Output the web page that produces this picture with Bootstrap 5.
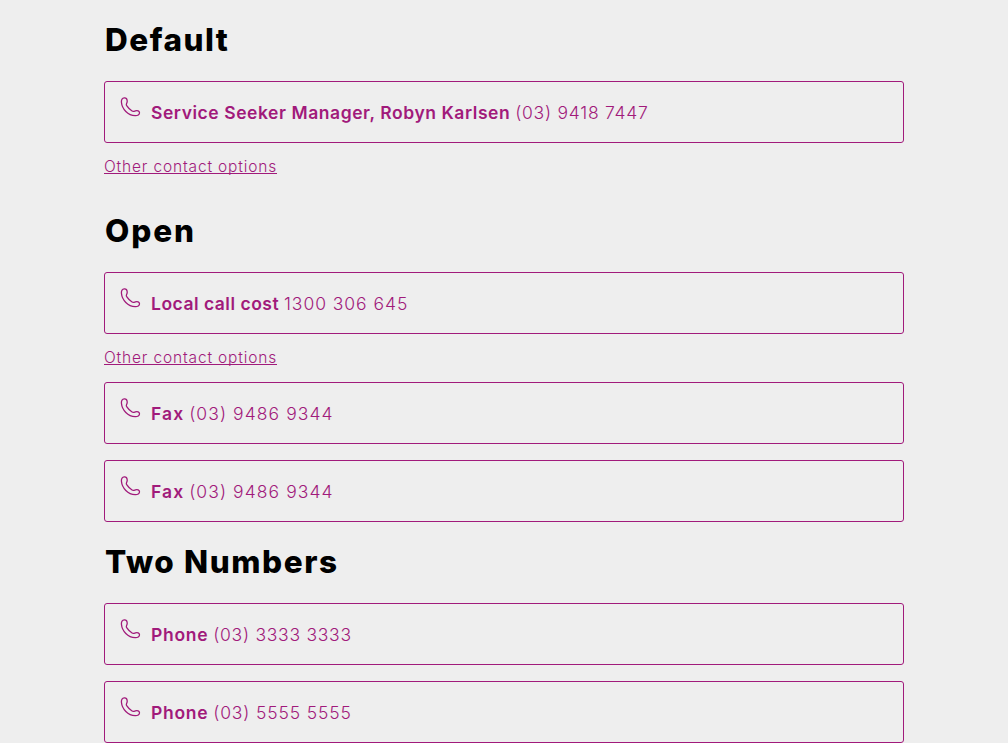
<!DOCTYPE html>
<html lang="en">
<head>
<meta charset="utf-8">
<meta name="viewport" content="width=device-width, initial-scale=1">
<title>Phone numbers</title>
<link href="https://cdn.jsdelivr.net/npm/bootstrap@5.3.0/dist/css/bootstrap.min.css" rel="stylesheet">
<style>
  :root { --brand: #a11a7b; }
  body { background: #eee; color: #000; font-family: Inter, "Liberation Sans", sans-serif; overflow: hidden; }
  .page { width: 800px; height: 743px; padding-top: 20px; }
  .title { font-size: 31.5px; line-height: 40px; font-weight: 800; letter-spacing: 1.6px; margin: 0 0 21px 1px; }
  .title-first { letter-spacing: 1.5px; }
  .title-open { margin-top: 32px; letter-spacing: 1.9px; }
  .title-two { margin-top: 20px; }
  .phone-box { height: 62px; border: 1px solid var(--brand); border-radius: 3px; color: var(--brand); padding: 0 15px; font-size: 17.5px; line-height: 24px; text-decoration: none; }
  .phone-box svg { width: 22px; height: 22px; margin: 14px 9px 0 0; flex: none; }
  .phone-box .line { margin-top: 19px; white-space: pre; }
  .phone-box strong { font-weight: 600; letter-spacing: .56px; }
  .phone-box .num { font-weight: 300; letter-spacing: .76px; }
  .phone-box.local strong { letter-spacing: .5px; }
  .phone-box.local .num { letter-spacing: .95px; }
  .phone-box.fax strong { letter-spacing: 1.1px; }
  .phone-box.fax .num { letter-spacing: 1.08px; }
  .phone-box.phone strong { letter-spacing: .72px; }
  .phone-box.phone .num { letter-spacing: .73px; }
  .phone-box.phone-alt .num { letter-spacing: .86px; }
  .more { display: block; color: var(--brand); font-weight: 300; font-size: 15.5px; line-height: 24px; letter-spacing: .84px; margin: 12px 0; text-decoration-thickness: 1px; text-underline-offset: 1px; text-decoration-skip-ink: none; width: max-content; }
  .more:hover, .phone-box:hover { color: var(--brand); }
</style>
</head>
<body>
<svg class="d-none"><symbol id="phone" viewBox="0 0 22 22"><path d="M4.3 1.8C2.4 2 1.3 3.8 1.4 6C2 13.4 8 19.2 15.2 19.7C17.6 19.8 19.6 18.7 19.5 16.8C19.4 14.9 17.4 14.3 15.5 14.8C14.2 15.2 13.2 15.8 12.1 15C9.8 13.5 7.9 11.6 6.5 9.4C5.8 8.2 7.1 7.2 7.2 5.5C7.3 3.3 6.3 1.6 4.3 1.8Z" fill="none" stroke="currentColor" stroke-width="1.3" stroke-linejoin="round"/></symbol></svg>
<main class="page mx-auto">
  <h1 class="title title-first">Default</h1>
  <a href="#" class="phone-box d-flex align-items-start"><svg><use href="#phone"/></svg><span class="line"><strong>Service Seeker Manager, Robyn Karlsen</strong> <span class="num">(03) 9418 7447</span></span></a>
  <a class="more" href="#">Other contact options</a>
  <h1 class="title title-open">Open</h1>
  <a href="#" class="phone-box local d-flex align-items-start"><svg><use href="#phone"/></svg><span class="line"><strong>Local call cost</strong> <span class="num">1300 306 645</span></span></a>
  <a class="more" href="#">Other contact options</a>
  <a href="#" class="phone-box fax d-flex align-items-start mb-3"><svg><use href="#phone"/></svg><span class="line"><strong>Fax</strong> <span class="num">(03) 9486 9344</span></span></a>
  <a href="#" class="phone-box fax d-flex align-items-start"><svg><use href="#phone"/></svg><span class="line"><strong>Fax</strong> <span class="num">(03) 9486 9344</span></span></a>
  <h1 class="title title-two">Two Numbers</h1>
  <a href="#" class="phone-box phone d-flex align-items-start mb-3"><svg><use href="#phone"/></svg><span class="line"><strong>Phone</strong> <span class="num">(03) 3333 3333</span></span></a>
  <a href="#" class="phone-box phone phone-alt d-flex align-items-start"><svg><use href="#phone"/></svg><span class="line"><strong>Phone</strong> <span class="num">(03) 5555 5555</span></span></a>
</main>
</body>
</html>
